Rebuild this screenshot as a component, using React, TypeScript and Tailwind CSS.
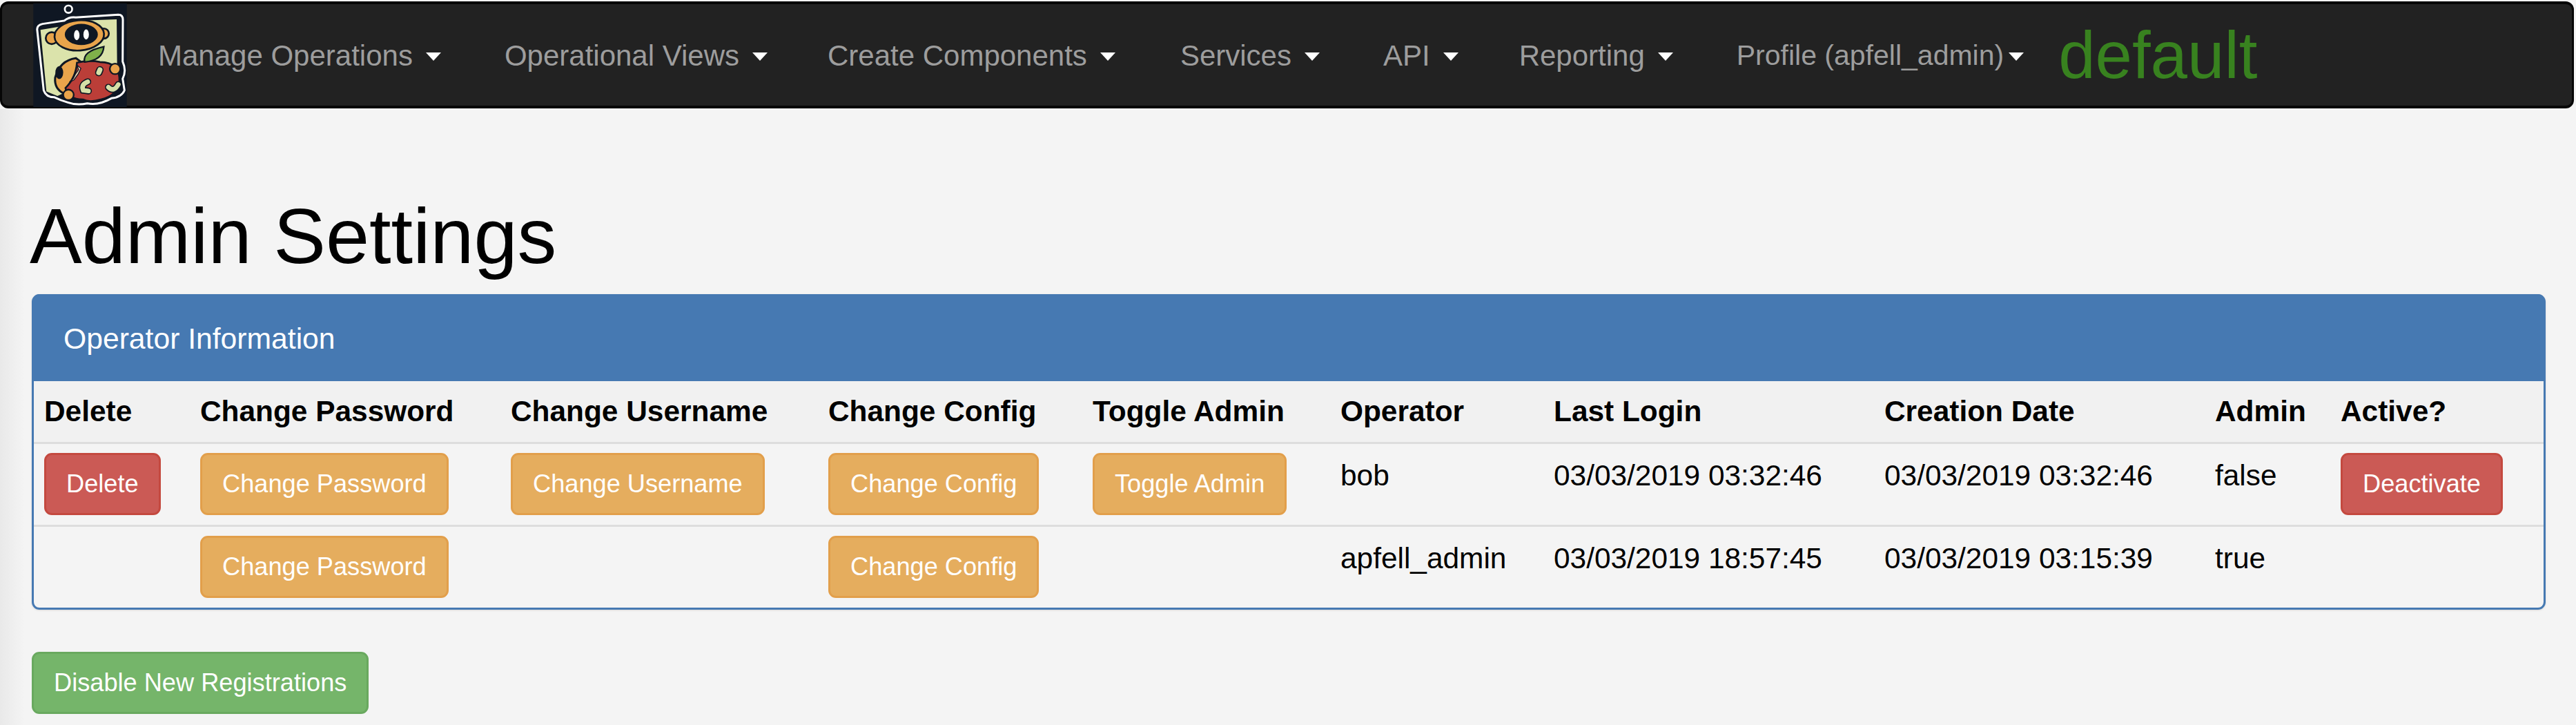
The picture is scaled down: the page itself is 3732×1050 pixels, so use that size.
const navItems = [
  { label: 'Manage Operations', cls: 'ml-[45px] mr-[92px]' },
  { label: 'Operational Views', cls: 'mr-[87px]' },
  { label: 'Create Components', cls: 'mr-[94px]' },
  { label: 'Services', cls: 'mr-[92px]' },
  { label: 'API', cls: 'mr-[88px]' },
  { label: 'Reporting', cls: 'mr-[92px]' },
];

function Caret({ className }: { className: string }) {
  return <span className={`inline-block border-x-[11px] border-t-[12px] border-x-transparent border-t-white ${className}`} />;
}

function Logo() {
  return (
    <svg viewBox="55 17 407 451" className="w-[136px] h-[150px] shrink-0">
      <rect x="55" y="17" width="407" height="451" fill="#0f1723" />
      <circle cx="208" cy="42" r="16" fill="none" stroke="#fff" strokeWidth="8" />
      <path d="M72 135Q68 112 95 106L190 92Q212 74 240 78L425 66Q445 66 445 88L444 270Q462 310 444 345L452 395Q440 425 395 430Q340 462 290 452Q245 462 205 448Q175 440 145 425Q110 425 100 395Z" fill="#0f1723" stroke="#fff" strokeWidth="9" />
      <path d="M86 132L180 116L250 92L418 86L420 300L160 420L112 400Z" fill="#dbe3ab" />
      <circle cx="135" cy="168" r="26" fill="#e9a44b" stroke="#0f1723" strokeWidth="8" />
      <circle cx="362" cy="148" r="22" fill="#e9a44b" stroke="#0f1723" strokeWidth="8" />
      <ellipse cx="255" cy="156" rx="108" ry="66" fill="#e9a44b" stroke="#0f1723" strokeWidth="8" transform="rotate(-4 255 156)" />
      <ellipse cx="264" cy="152" rx="72" ry="46" fill="#0f1723" />
      <ellipse cx="244" cy="155" rx="12" ry="22" fill="#fff" />
      <ellipse cx="285" cy="152" rx="12" ry="22" fill="#fff" />
      <path d="M150 340Q170 265 240 255L300 300L240 425L190 410Q145 390 150 340Z" fill="#e9a44b" stroke="#0f1723" strokeWidth="9" />
      <ellipse cx="168" cy="318" rx="17" ry="28" fill="#0f1723" />
      <path d="M245 275Q300 262 345 272Q435 272 430 360Q420 420 350 435Q300 450 270 435Q205 435 195 385Q240 340 245 275Z" fill="#bb3e38" stroke="#0f1723" strokeWidth="8" />
      <path d="M245 285L252 305L238 325L228 345L212 360L232 350L250 325L262 300Z" fill="#ecd3b0" stroke="#0f1723" strokeWidth="4" />
      <path d="M278 272Q268 225 362 205Q358 265 278 272Z" fill="#7fb04a" stroke="#0f1723" strokeWidth="7" />
      <circle cx="411" cy="302" r="23" fill="#e9a44b" stroke="#0f1723" strokeWidth="7" />
      <circle cx="208" cy="415" r="23" fill="#e9a44b" stroke="#0f1723" strokeWidth="7" />
      <path d="M345 306L340 318" fill="none" stroke="#0f1723" strokeWidth="32" strokeLinecap="round" />
      <path d="M345 306L340 318" fill="none" stroke="#d6e0a8" strokeWidth="22" strokeLinecap="round" />
      <path d="M292 358Q262 370 272 395L295 398" fill="none" stroke="#0f1723" strokeWidth="30" strokeLinecap="round" />
      <path d="M292 358Q262 370 272 395L295 398" fill="none" stroke="#d6e0a8" strokeWidth="20" strokeLinecap="round" />
      <path d="M382 382Q405 405 425 370" fill="none" stroke="#0f1723" strokeWidth="30" strokeLinecap="round" />
      <path d="M382 382Q405 405 425 370" fill="none" stroke="#d6e0a8" strokeWidth="20" strokeLinecap="round" />
    </svg>
  );
}

function Btn({ color, label, className }: { color: string; label: string; className?: string }) {
  return (
    <button className={`block h-[90px] px-[29px] border-[3px] rounded-[11px] text-white text-[36.2px] whitespace-nowrap ${color} ${className ?? ''}`}>
      {label}
    </button>
  );
}

const red = 'bg-[#cb5a55] border-[#c4493f]';
const orange = 'bg-[#e5ad5e] border-[#e29f4b]';

const heads = ['Delete', 'Change Password', 'Change Username', 'Change Config', 'Toggle Admin', 'Operator', 'Last Login', 'Creation Date', 'Admin', 'Active?'];

export default function App() {
  return (
    <div className="relative min-h-[1050px] bg-[#f4f4f4] font-['Liberation_Sans',Arial,sans-serif] text-black overflow-hidden">
      {/* faint window shadow down the left edge */}
      <div className="absolute left-0 top-[158px] bottom-0 w-[36px] bg-gradient-to-r from-[#e9e9e9] to-transparent" />
      <div className="pt-[2px] relative">
        <nav className="h-[155px] mr-[3px] bg-[#222222] border-x-[3px] border-t-[4px] border-b-[4px] border-[#060606] rounded-[12px] flex items-center text-[42px] text-[#9d9d9d]">
          <div className="ml-[45px]"><Logo /></div>
          {navItems.map((item) => (
            <a key={item.label} className={`flex items-center whitespace-nowrap pt-[2px] ${item.cls}`}>
              {item.label}
              <Caret className="ml-[19px] mt-[3px]" />
            </a>
          ))}
          <a className="flex items-center whitespace-nowrap pt-[2px] text-[41px]">
            Profile (apfell_admin)
            <Caret className="ml-[7px] mt-[3px]" />
          </a>
          <span className="ml-[50px] text-[96px] leading-none text-[#38821f]">default</span>
        </nav>
      </div>

      <h1 className="relative ml-[43px] mt-[123px] text-[113.5px] leading-[123px] font-normal">Admin Settings</h1>

      <section className="relative mt-[23px] ml-[46px] mr-[44px] border-[3px] border-[#4679b2] rounded-[11px] shadow-sm">
        <div className="h-[126px] -mt-[3px] pt-[2px] bg-[#4679b2] flex items-center pl-[43px] text-[42.67px] text-white rounded-t-[8px]">
          Operator Information
        </div>
        <table className="w-full table-fixed border-collapse text-[42.4px] leading-[61px]">
          <colgroup>
            <col className="w-[226px]" />
            <col className="w-[450px]" />
            <col className="w-[460px]" />
            <col className="w-[383px]" />
            <col className="w-[359px]" />
            <col className="w-[309px]" />
            <col className="w-[479px]" />
            <col className="w-[479px]" />
            <col className="w-[182px]" />
            <col />
          </colgroup>
          <thead>
            <tr className="h-[89px] bg-[#f1f1f1] border-b-[3px] border-[#dddddd]">
              {heads.map((h) => (
                <th key={h} className="px-[15px] text-left font-bold whitespace-nowrap">{h}</th>
              ))}
            </tr>
          </thead>
          <tbody>
            <tr className="h-[120px] border-b-[3px] border-[#dddddd] align-top">
              <td className="px-[15px] pt-[13px]"><Btn color={red} label="Delete" /></td>
              <td className="px-[15px] pt-[13px]"><Btn color={orange} label="Change Password" /></td>
              <td className="px-[15px] pt-[13px]"><Btn color={orange} label="Change Username" /></td>
              <td className="px-[15px] pt-[13px]"><Btn color={orange} label="Change Config" /></td>
              <td className="px-[15px] pt-[13px]"><Btn color={orange} label="Toggle Admin" /></td>
              <td className="px-[15px] pt-[15px]">bob</td>
              <td className="px-[15px] pt-[15px]">03/03/2019 03:32:46</td>
              <td className="px-[15px] pt-[15px]">03/03/2019 03:32:46</td>
              <td className="px-[15px] pt-[15px]">false</td>
              <td className="px-[15px] pt-[13px]"><Btn color={red} label="Deactivate" /></td>
            </tr>
            <tr className="h-[119px] align-top">
              <td className="px-[15px] pt-[15px]" />
              <td className="px-[15px] pt-[13px]"><Btn color={orange} label="Change Password" /></td>
              <td className="px-[15px] pt-[15px]" />
              <td className="px-[15px] pt-[13px]"><Btn color={orange} label="Change Config" /></td>
              <td className="px-[15px] pt-[15px]" />
              <td className="px-[15px] pt-[15px]">apfell_admin</td>
              <td className="px-[15px] pt-[15px]">03/03/2019 18:57:45</td>
              <td className="px-[15px] pt-[15px]">03/03/2019 03:15:39</td>
              <td className="px-[15px] pt-[15px]">true</td>
              <td className="px-[15px] pt-[15px]" />
            </tr>
          </tbody>
        </table>
      </section>

      <Btn color="bg-[#75b56a] border-[#69a95f]" label="Disable New Registrations" className="relative mt-[61px] ml-[46px]" />
    </div>
  );
}
